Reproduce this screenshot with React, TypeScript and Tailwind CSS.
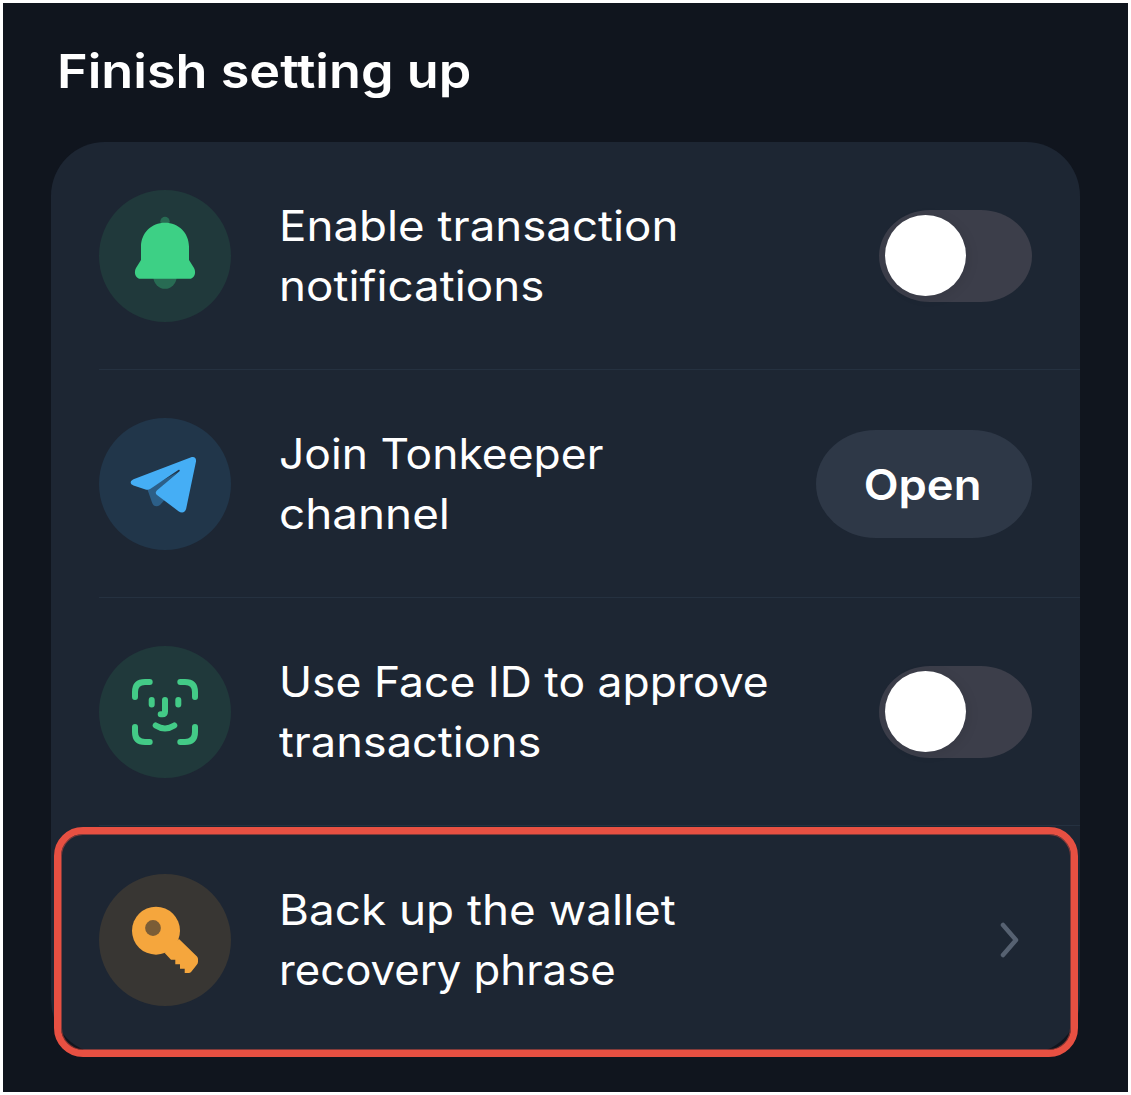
import type { ReactNode } from "react";

function Badge({ tone, children }: { tone: string; children: ReactNode }) {
  return (
    <div className={`size-[132px] shrink-0 rounded-full ${tone}`}>
      <svg viewBox="0 0 132 132" className="size-full" fill="none">
        {children}
      </svg>
    </div>
  );
}

function Bell() {
  return (
    <Badge tone="bg-[#20393b]">
      <circle cx="66" cy="31.5" r="4.7" fill="#286b53" />
      <path d="M54.3 86.5a11.7 12.3 0 0 0 23.4 0Z" fill="#286b53" />
      <path
        d="M66 32.7C52.5 32.7 42 43 42 56.5V70L37 78C34.5 82.5 36.5 88.7 41.5 88.7H90.5C95.5 88.7 97.5 82.5 95 78L90 70V56.5C90 43 79.5 32.7 66 32.7Z"
        fill="#3dd085"
      />
    </Badge>
  );
}

function Plane() {
  return (
    <Badge tone="bg-[#21364a]">
      <path d="M48.3 71L53 84.5C54.5 88.5 57.5 89.5 61 87L65.5 82L57 74L79 54Z" fill="#2c5f88" />
      <path
        d="M34.5 61.3L91.5 39.5C95 38.2 97.5 39.5 97 43.5L87.2 90.5C86.2 95 82.5 95.5 79.5 93.2L58 77C56.4 75.6 56.3 74 57.8 72.4L80.5 53.2C81.3 52 80.3 51.3 79.3 52L51.5 70.7C49.7 72 48.3 72 46.5 71.5L34.5 67.5C30.5 66 31 62.8 34.5 61.3Z"
        fill="#45aef5"
      />
    </Badge>
  );
}

function Face() {
  return (
    <Badge tone="bg-[#20393b]">
      <g stroke="#43cb87" strokeWidth="6" strokeLinecap="round" strokeLinejoin="round">
        <path d="M36 51V46Q36 36 46 36H50.7M81.3 36H86Q96 36 96 46V51M96 81V86Q96 96 86 96H81.3M50.7 96H46Q36 96 36 86V81" />
        <path d="M52.7 54V58.5M79.3 54V58.5M66 54V65.5Q66 68.3 63.5 68.3H61.7M56.7 79.5Q66 85.5 75.3 79.5" />
      </g>
    </Badge>
  );
}

function Key() {
  return (
    <Badge tone="bg-[#383633]">
      <circle cx="57" cy="56.7" r="24" fill="#f5a63d" />
      <path
        d="M80 65L98 82.5Q99 83.5 99 85V87.5Q99 89.3 98 90.5L92.5 97.5Q91.3 99 89.5 99H85.7V94.7H81V90.3H76.3V85.7H72L65.7 79Z"
        fill="#f5a63d"
      />
      <circle cx="54" cy="54" r="7.9" fill="#7b5d36" />
    </Badge>
  );
}

function Toggle() {
  return (
    <button
      role="switch"
      aria-checked="false"
      className="flex h-[92px] w-[153px] shrink-0 items-center rounded-[51px/46px] bg-[#3c3e4a] pl-[6px]"
    >
      <span className="size-[81px] rounded-full bg-white shadow-[3px_2px_12px_rgba(0,0,0,0.08)]" />
    </button>
  );
}

function Line({ stretch, children }: { stretch: string; children: string }) {
  return <span className={`block w-max origin-left ${stretch}`}>{children}</span>;
}

function Row({
  icon,
  lines,
  action,
  last,
}: {
  icon: ReactNode;
  lines: ReactNode;
  action: ReactNode;
  last?: boolean;
}) {
  return (
    <div className="pl-12">
      <div
        className={`flex h-[228px] items-center border-b pr-12 ${last ? "border-transparent" : "border-[#253140]"}`}
      >
        {icon}
        <div className="ml-12 flex-1 pt-px text-[42px] leading-[60px] whitespace-nowrap">{lines}</div>
        {action}
      </div>
    </div>
  );
}

export default function App() {
  return (
    <div className="h-[1095px] w-[1131px] bg-white pt-[3px] pl-[3px] font-['Inter',sans-serif] text-white">
      <main className="h-[1089px] w-[1125px] bg-[#10151e] px-12 pt-[36px]">
        <h1 className="ml-[6px] h-[103px] text-[47px] leading-[64px] font-semibold">
          <Line stretch="scale-x-[1.11]">Finish setting up</Line>
        </h1>
        <section className="relative h-[912px] w-[1029px] rounded-[54px] bg-[#1d2633]">
          <Row
            icon={<Bell />}
            lines={
              <>
                <Line stretch="scale-x-[1.087]">Enable transaction</Line>
                <Line stretch="scale-x-[1.089]">notifications</Line>
              </>
            }
            action={<Toggle />}
          />
          <Row
            icon={<Plane />}
            lines={
              <>
                <Line stretch="scale-x-[1.057]">Join Tonkeeper</Line>
                <Line stretch="scale-x-[1.091]">channel</Line>
              </>
            }
            action={
              <button className="flex h-[108px] w-[216px] items-center justify-center rounded-[60px/54px] bg-[#2e3847] pt-px pr-[2px] text-[42px] font-semibold">
                <span className="scale-x-[1.08]">Open</span>
              </button>
            }
          />
          <Row
            icon={<Face />}
            lines={
              <>
                <Line stretch="scale-x-[1.058]">Use Face ID to approve</Line>
                <Line stretch="scale-x-[1.076]">transactions</Line>
              </>
            }
            action={<Toggle />}
          />
          <Row
            last
            icon={<Key />}
            lines={
              <>
                <Line stretch="scale-x-[1.091]">Back up the wallet</Line>
                <Line stretch="scale-x-[1.04]">recovery phrase</Line>
              </>
            }
            action={
              <svg className="mr-[10px] h-10 w-6" viewBox="0 0 24 40" fill="none">
                <path d="M5 5L18 20L5 35" stroke="#566171" strokeWidth="4.5" strokeLinecap="round" strokeLinejoin="round" />
              </svg>
            }
          />
          <div className="absolute top-[685px] left-[3px] h-[230px] w-[1024px] rounded-[29px] border-[7px] border-[#e75042] shadow-[inset_0_0_0_1px_rgba(231,80,66,0.5)]" />
        </section>
      </main>
    </div>
  );
}
